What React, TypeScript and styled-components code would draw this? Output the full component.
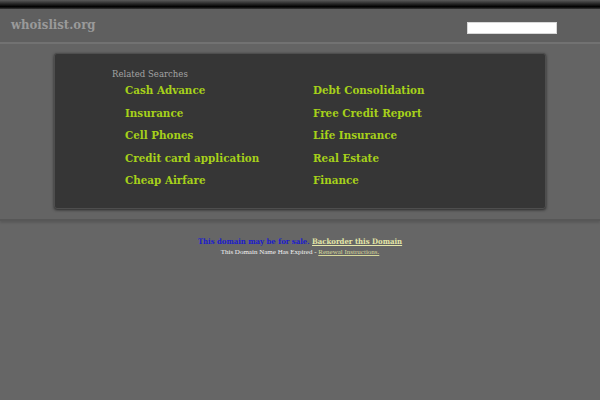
import React from "react";
import styled, { createGlobalStyle } from "styled-components";

const Global = createGlobalStyle`
  html, body { margin: 0; padding: 0; background: #666666; }
  body { font-family: "DejaVu Serif Condensed", "DejaVu Serif", serif; font-stretch: condensed; }
`;

const serif = `"DejaVu Serif Condensed", "DejaVu Serif", serif`;

const Page = styled.div`
  width: 600px;
  min-height: 400px;
  background: #666666;
`;

const TopStrip = styled.div`
  height: 9px;
  background: linear-gradient(to bottom, #5a5a5a 0%, #2a2a2a 40%, #000000 75%, #3a3a3a 100%);
`;

const Header = styled.div`
  height: 33px;
  background: #5f5f5f;
  border-bottom: 2px solid #727272;
  display: flex;
  align-items: center;
  justify-content: space-between;
  padding: 0 43px 0 11px;
`;

const Logo = styled.div`
  font-family: ${serif};
  font-stretch: condensed;
  font-weight: bold;
  font-size: 13px;
  color: #9a9a9a;
  margin-top: -2px;
`;

const SearchBox = styled.div`
  width: 88px;
  height: 10px;
  background: #ffffff;
  border: 1px solid #d8d8d8;
  margin-top: 4px;
`;

const Band = styled.div`
  background: #646464;
  padding: 9px 0 10px;
  border-bottom: 2px solid #575757;
  box-shadow: 0 2px 2px rgba(0, 0, 0, 0.12);
  display: flex;
  justify-content: center;
`;

const Box = styled.div`
  width: 492px;
  height: 156px;
  background: #363636;
  border: 1px solid #4e4e4e;
  border-radius: 3px;
  box-shadow: 0 1px 3px rgba(0, 0, 0, 0.6);
  padding: 14px 0 0 57px;
  box-sizing: border-box;
`;

const Caption = styled.div`
  font-family: ${serif};
  font-stretch: condensed;
  font-size: 9.5px;
  color: #a3a3a3;
  line-height: 12px;
`;

const Grid = styled.div`
  display: grid;
  grid-template-columns: 188px 188px;
  grid-auto-rows: 22.5px;
  padding-left: 13px;
  margin-top: -1px;
`;

const Link = styled.a`
  font-family: ${serif};
  font-stretch: condensed;
  font-weight: bold;
  font-size: 11.5px;
  color: #a6d11a;
  text-decoration: none;
  line-height: 22.5px;
  white-space: nowrap;
`;

const Footer = styled.div`
  padding-top: 15px;
  text-align: center;
`;

const SaleLine = styled.div`
  font-family: ${serif};
  font-stretch: condensed;
  font-weight: bold;
  font-size: 7.7px;
  line-height: 11px;
`;

const Sale = styled.span`
  color: #1c1ccc;
`;

const Backorder = styled.a`
  color: #e4e6a8;
  text-decoration: underline;
`;

const ExpireLine = styled.div`
  font-family: "Liberation Serif", serif;
  font-size: 7px;
  color: #f2f2f2;
  line-height: 10px;
`;

const Renewal = styled.a`
  color: #d6d89a;
  text-decoration: underline;
`;

const links = [
  "Cash Advance",
  "Debt Consolidation",
  "Insurance",
  "Free Credit Report",
  "Cell Phones",
  "Life Insurance",
  "Credit card application",
  "Real Estate",
  "Cheap Airfare",
  "Finance",
];

export default function App() {
  return (
    <Page>
      <Global />
      <TopStrip />
      <Header>
        <Logo>whoislist.org</Logo>
        <SearchBox />
      </Header>
      <Band>
        <Box>
          <Caption>Related Searches</Caption>
          <Grid>
            {links.map((l) => (
              <div key={l}>
                <Link href="#">{l}</Link>
              </div>
            ))}
          </Grid>
        </Box>
      </Band>
      <Footer>
        <SaleLine>
          <Sale>This domain may be for sale.</Sale>{" "}
          <Backorder href="#">Backorder this Domain</Backorder>
        </SaleLine>
        <ExpireLine>
          This Domain Name Has Expired - <Renewal href="#">Renewal Instructions.</Renewal>
        </ExpireLine>
      </Footer>
    </Page>
  );
}
